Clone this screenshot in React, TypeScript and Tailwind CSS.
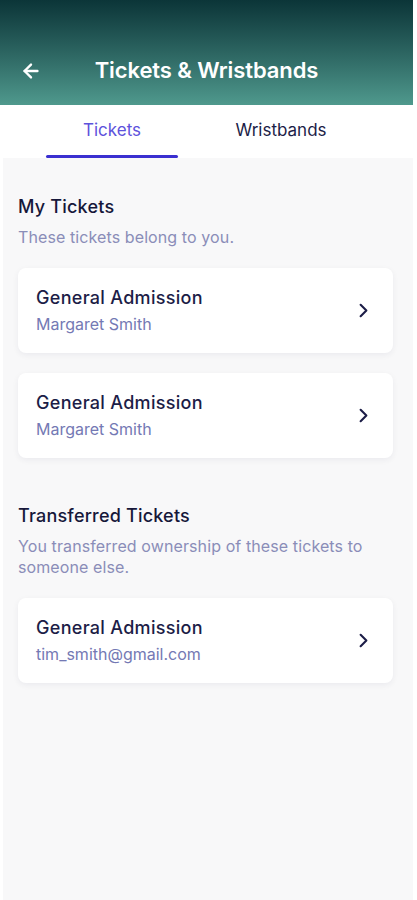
import { ArrowLeft, ChevronRight } from 'lucide-react';

type Ticket = { title: string; sub: string };

const myTickets: Ticket[] = [
  { title: 'General Admission', sub: 'Margaret Smith' },
  { title: 'General Admission', sub: 'Margaret Smith' },
];

const transferred: Ticket[] = [{ title: 'General Admission', sub: 'tim_smith@gmail.com' }];

const TicketCard = ({ ticket }: { ticket: Ticket }) => (
  <button className="w-full h-[85px] flex items-center bg-white rounded-lg shadow-[0_2px_6px_rgba(20,20,60,0.06)] pl-[18px] pr-[18px] text-left">
    <div className="flex-1 min-w-0">
      <p className="text-[18px] leading-[24px] font-medium text-[#1c1d47] tracking-[0.3px]">{ticket.title}</p>
      <p className="text-[16px] leading-[22px] text-[#7479b4] mt-[3px]">{ticket.sub}</p>
    </div>
    <ChevronRight size={23} strokeWidth={2.2} className="text-[#1c1d47]" />
  </button>
);

const Section = ({ title, sub, tickets }: { title: string; sub: string; tickets: Ticket[] }) => (
  <section>
    <h2 className="text-[18px] leading-[24px] font-medium text-[#16173a] tracking-[0.2px]">{title}</h2>
    <p className="text-[16px] leading-[21px] text-[#8a8db8] mt-[8px] pr-6 tracking-[0.1px]">{sub}</p>
    <div className="mt-[20px] flex flex-col gap-[20px]">
      {tickets.map((t, i) => (
        <TicketCard key={i} ticket={t} />
      ))}
    </div>
  </section>
);

export default function App() {
  return (
    <div
      className="min-h-screen bg-white flex flex-col"
      style={{ fontFamily: 'Inter, "Noto Sans", sans-serif' }}
    >
      <header className="h-[105px] mr-[4px] bg-gradient-to-b from-[#0b3538] to-[#4f998d] flex items-center pt-[36px] px-5">
        <ArrowLeft size={22} strokeWidth={2.6} className="text-white" />
        <h1 className="flex-1 text-center text-[22px] font-semibold text-white tracking-[-0.1px] pr-[22px]">
          Tickets &amp; Wristbands
        </h1>
      </header>

      <nav className="h-[53px] bg-white flex mr-[4px]">
        <div className="w-[46px]" />
        <div className="w-[132px] flex flex-col">
          <span className="flex-1 flex items-center justify-center text-[17px] text-[#5d52dc] pt-[2px]">
            Tickets
          </span>
          <div className="h-[3px] bg-[#3a2fd0] rounded-full" />
        </div>
        <div className="w-[206px] flex items-center justify-center text-[17px] text-[#1c1d47] pb-[1px]">
          Wristbands
        </div>
      </nav>

      <main className="flex-1 bg-[#f8f8f9] ml-[3px] mr-[4px] pl-[15px] pr-[20px] pt-[37px] pb-10 flex flex-col gap-[46px]">
        <Section title="My Tickets" sub="These tickets belong to you." tickets={myTickets} />
        <Section
          title="Transferred Tickets"
          sub="You transferred ownership of these tickets to someone else."
          tickets={transferred}
        />
      </main>
    </div>
  );
}
